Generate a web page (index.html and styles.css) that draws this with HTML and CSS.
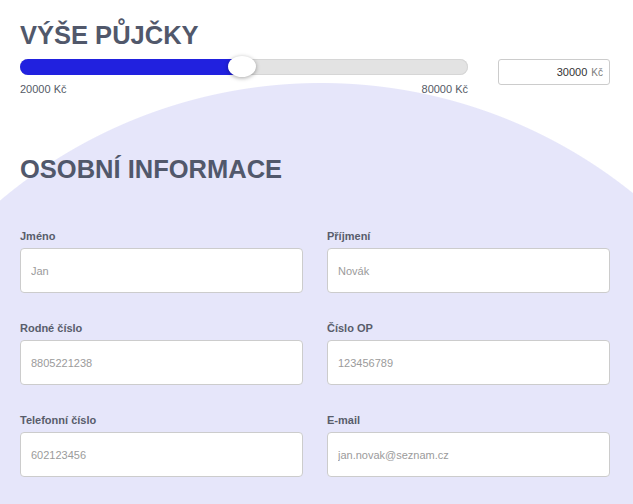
FILE: index.html
```html
<!DOCTYPE html>
<html lang="cs">
<head>
<meta charset="utf-8">
<title>Půjčka</title>
<link rel="stylesheet" href="styles.css">
</head>
<body>
<main class="page">
  <section class="loan">
    <h1 class="title">VÝŠE PŮJČKY</h1>
    <div class="loan-row">
      <div class="slider">
        <div class="track">
          <div class="fill" style="width:50%"></div>
          <div class="thumb" style="left:49.6%"></div>
        </div>
        <div class="range-labels"><span>20000 Kč</span><span>80000 Kč</span></div>
      </div>
      <div class="amount"><span class="amount-value">30000</span><span class="amount-unit">Kč</span></div>
    </div>
  </section>
  <section class="personal">
    <h2 class="title">OSOBNÍ INFORMACE</h2>
    <div class="form-grid">
      <label class="field"><span class="field-label">Jméno</span><input class="field-input" type="text" placeholder="Jan"></label>
      <label class="field"><span class="field-label">Příjmení</span><input class="field-input" type="text" placeholder="Novák"></label>
      <label class="field"><span class="field-label">Rodné číslo</span><input class="field-input" type="text" placeholder="8805221238"></label>
      <label class="field"><span class="field-label">Číslo OP</span><input class="field-input" type="text" placeholder="123456789"></label>
      <label class="field"><span class="field-label">Telefonní číslo</span><input class="field-input" type="text" placeholder="602123456"></label>
      <label class="field"><span class="field-label">E-mail</span><input class="field-input" type="text" placeholder="jan.novak@seznam.cz"></label>
    </div>
  </section>
</main>
</body>
</html>
```
FILE: styles.css
```css
html, body {
  margin: 0;
  padding: 0;
}

body {
  min-height: 100vh;
  font-family: "Liberation Sans", Arial, sans-serif;
  background: #fff radial-gradient(circle 497px at 321px 580px, #e6e6fa 496.5px, #ffffff 497.5px) no-repeat;
}

.page {
  padding: 20px 23px 0 20px;
}

.title {
  margin: 0;
  font: bold 25.5px/30px "Liberation Sans", Arial, sans-serif;
  color: #51586b;
}

.loan-row {
  display: flex;
  align-items: flex-start;
  gap: 30px;
  margin-top: 9px;
}

.slider {
  flex: 1;
}

.track {
  position: relative;
  height: 16px;
  background: #e3e3e3;
  border-radius: 8px;
  box-shadow: inset 0 0 0 1px #d6d6d6;
}

.fill {
  height: 100%;
  background: #2121df;
  border-radius: 8px;
}

.thumb {
  position: absolute;
  top: -3px;
  width: 28px;
  height: 21px;
  margin-left: -14px;
  background: #fff;
  border-radius: 50%;
  box-shadow: 0 1px 4px rgba(0, 0, 0, 0.35);
}

.range-labels {
  display: flex;
  justify-content: space-between;
  margin-top: 8px;
  font-size: 11px;
  line-height: 13px;
  color: #555a66;
}

.amount {
  box-sizing: border-box;
  width: 112px;
  height: 26px;
  display: flex;
  align-items: center;
  justify-content: flex-end;
  gap: 4px;
  padding-right: 6px;
  background: #fff;
  border: 1px solid #cccccc;
  border-radius: 3px;
  font-size: 11px;
  color: #333;
}

.amount-unit {
  font-size: 10px;
  color: #7a7a7a;
}

.personal .title {
  margin-top: 58px;
}

.form-grid {
  display: grid;
  grid-template-columns: 1fr 1fr;
  column-gap: 24px;
  row-gap: 29px;
  margin-top: 46px;
}

.field {
  display: flex;
  flex-direction: column;
  gap: 5px;
}

.field-label {
  font-size: 11px;
  line-height: 13px;
  font-weight: bold;
  color: #585d6b;
}

.field-input {
  box-sizing: border-box;
  height: 45px;
  margin: 0;
  padding: 0 10px;
  background: #fff;
  border: 1px solid #cccccc;
  border-radius: 4px;
  font: 11px "Liberation Sans", Arial, sans-serif;
  color: #333;
  outline: none;
}

.field-input::placeholder {
  color: #9b9b9b;
}
```
